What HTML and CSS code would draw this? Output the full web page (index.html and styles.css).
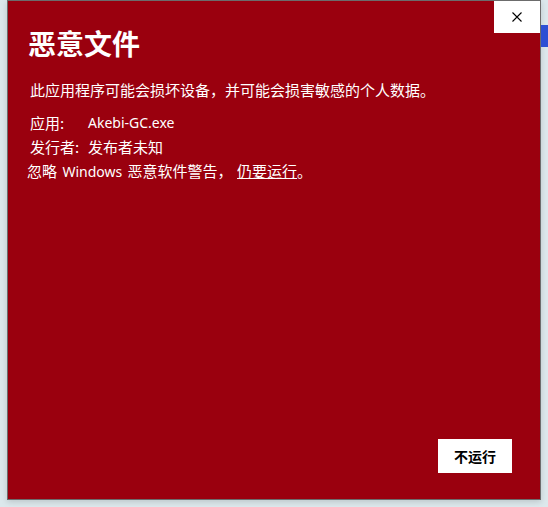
FILE: index.html
```html
<!DOCTYPE html>
<html lang="zh-CN">
<head>
    <meta charset="UTF-8">
    <meta name="viewport" content="width=device-width, initial-scale=1.0">
    <title>恶意文件</title>
    <link rel="stylesheet" href="styles.css">
</head>
<body>
    <div class="dialog">
        <div class="header">
            <h1 class="title">恶意文件</h1>
            <button class="close" aria-label="关闭">
                <svg width="10" height="10" viewBox="0 0 10 10">
                    <path d="M0.5 0.5 L9.5 9.5 M9.5 0.5 L0.5 9.5" stroke="#000" stroke-width="1.1" fill="none"/>
                </svg>
            </button>
        </div>

        <div class="content">
            <p class="message">此应用程序可能会损坏设备，并可能会损害敏感的个人数据。</p>

            <div class="info">
                <span class="label">应用:</span>
                <span class="value latin">Akebi-GC.exe</span>
                <span class="label">发行者:</span>
                <span class="value">发布者未知</span>
            </div>

            <p class="ignore">忽略 <span class="latin">Windows</span> 恶意软件警告<span class="punct">，</span><a href="#" class="run-anyway">仍要运行</a>。</p>
        </div>

        <div class="footer">
            <button class="dont-run">不运行</button>
        </div>
    </div>

    <div class="backdrop">
        <div class="strip"></div>
    </div>
</body>
</html>
```

FILE: styles.css
```css
body {
    margin: 0;
    height: 507px;
    display: flex;
    background: #dce8ec;
    font-family: "Noto Sans CJK SC", sans-serif;
    text-spacing-trim: space-all;
    overflow: hidden;
}

.latin {
    font-family: "Noto Sans", "Noto Sans CJK SC", sans-serif;
    font-size: 14px;
}

.dialog {
    width: 532px;
    height: 498px;
    margin-left: 7px;
    border: 1px solid #6c6c6c;
    background: #9a000e;
    color: #fff;
    display: flex;
    flex-direction: column;
    box-shadow: 0 2px 6px rgba(0, 0, 0, 0.15);
    flex-shrink: 0;
}

.header {
    display: flex;
    align-items: flex-start;
}

.title {
    flex: 1;
    margin: 0;
    padding: 26px 0 0 20px;
    font-size: 28px;
    font-weight: bold;
    line-height: 32px;
}

.close {
    width: 46px;
    height: 32px;
    border: none;
    background: #fff;
    display: flex;
    align-items: center;
    justify-content: center;
    padding: 0;
}

.content {
    padding: 19px 22px 0 22px;
    font-size: 15px;
    line-height: 24px;
}

.message {
    margin: 0 0 9px 0;
}

.info {
    display: grid;
    grid-template-columns: 58px auto;
}

.label,
.value {
    line-height: 24px;
}

.ignore {
    margin: 0 0 0 -3px;
    word-spacing: 2px;
}

.punct {
    display: inline-block;
    width: 1.3em;
}

.run-anyway {
    color: #fff;
    text-decoration: underline;
}

.footer {
    margin-top: auto;
    display: flex;
    justify-content: flex-end;
    padding: 0 28px 26px 0;
}

.dont-run {
    width: 74px;
    height: 34px;
    border: none;
    background: #fff;
    color: #000;
    font-family: "Noto Sans CJK SC", sans-serif;
    font-size: 14px;
    font-weight: bold;
    padding: 0;
}

.backdrop {
    flex: 1;
}

.strip {
    margin-top: 25px;
    height: 22px;
    background: #2d4fd4;
}
```
